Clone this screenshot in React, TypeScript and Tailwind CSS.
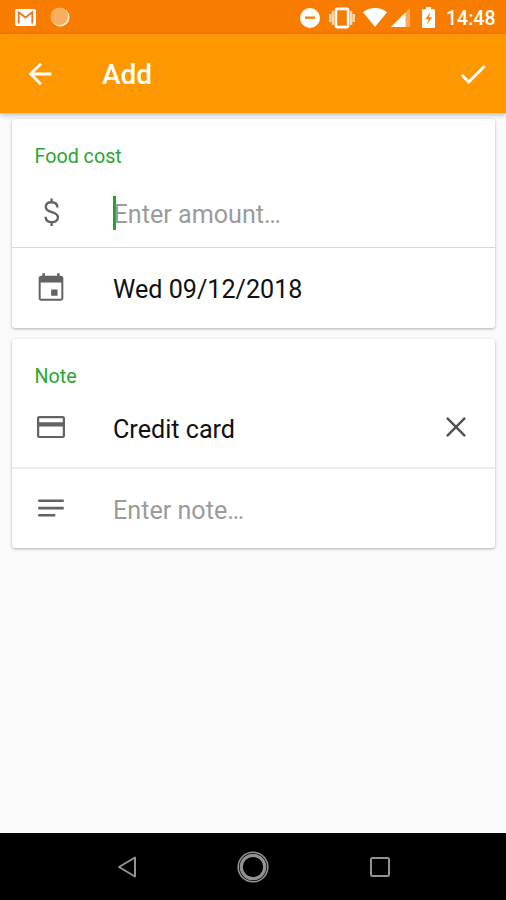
import type { ReactNode } from "react"

type IconProps = { d: string; className?: string }

// 24dp material glyphs
const icons = {
  back: "M20 11H7.83l5.59-5.59L12 4l-8 8 8 8 1.41-1.41L7.83 13H20v-2z",
  check: "M9 16.17L4.83 12l-1.42 1.41L9 19 21 7l-1.41-1.41z",
  event:
    "M16.6 13h-4.5v4.5h4.5V13zM16.3 1.5v1.800H7.7V1.5H5.9v1.800H5c-1 0-1.7.8-1.7 1.7v14.3c0 1 .8 1.7 1.7 1.7h14c1 0 1.7-.8 1.7-1.7V5c0-1-.8-1.7-1.7-1.7h-.9V1.5h-1.8zM19.3 19.6H4.7V8.2h14.6v11.4z",
  card: "M20.3 4.2H3.7c-.9 0-1.6.7-1.6 1.6v12.4c0 .9.7 1.6 1.6 1.6h16.6c.9 0 1.6-.7 1.6-1.6V5.800c0-.9-.7-1.6-1.6-1.6zm0 14.100H3.7v-6.600h16.600v6.600zm0-9.600H3.7V5.800h16.600v2.900z",
  close:
    "M19 6.2L17.8 5 12 10.8 6.2 5 5 6.2 10.8 12 5 17.8 6.2 19 12 13.2 17.8 19 19 17.8 13.2 12z",
  notes: "M3 18h12v-1.8H3V18zM3 6v1.8h18V6H3zm0 7h18v-1.8H3V13z",
}

function Icon({ d, className = "" }: IconProps) {
  return (
    <svg viewBox="0 0 24 24" fill="currentColor" className={`size-[34px] shrink-0 ${className}`}>
      <path d={d} />
    </svg>
  )
}

function StatusBar() {
  return (
    <div className="flex h-[34px] shrink-0 items-center bg-[#f77c00] pl-[15px] pr-[11px] text-white">
      {/* Notifications */}
      <svg viewBox="0 0 21 17" className="h-[17px] w-[21px]">
        <rect width="21" height="17" rx="2" fill="currentColor" />
        <path d="M3.7 14.5V3.3l6.8 5.2 6.8-5.2v11.2" fill="none" stroke="#e8742a" strokeWidth="1.8" />
      </svg>
      <svg viewBox="0 0 20 20" className="ml-[14px] size-5">
        <circle cx="10.3" cy="10.3" r="9.2" fill="#fff0df" />
        <circle cx="9.3" cy="9.2" r="8.8" fill="#f8ad5f" />
      </svg>

      {/* System */}
      <svg viewBox="0 0 20 20" className="ml-auto mt-px size-5">
        <circle cx="10" cy="10" r="10" fill="currentColor" />
        <path d="M5 8.5h10v2.3H5z" fill="#f77c00" />
      </svg>
      <svg viewBox="0 0 26 22" className="ml-[9px] mt-px h-[22px] w-[26px]">
        <path d="M3.9 4v14M22.1 4v14M1.2 7v8M24.8 7v8" stroke="currentColor" strokeWidth="2.4" opacity=".7" />
        <rect x="6.9" y="1.9" width="12.2" height="18.2" rx="1.5" fill="none" stroke="currentColor" strokeWidth="2.6" />
      </svg>
      <svg viewBox="0 0 24 19" className="ml-2 h-[19px] w-6" fill="currentColor">
        <path d="M12 19L0 4.2C3.2 1.5 7.3 0 12 0s8.8 1.5 12 4.2z" />
      </svg>
      <svg viewBox="0 0 19 19" className="ml-1 mt-px size-[19px]" fill="currentColor">
        <path d="M19 0v19H0z" opacity=".35" />
        <path d="M14.5 4.5V19H0z" />
      </svg>
      <svg viewBox="0 0 13 21" className="ml-3 h-[21px] w-[13px]">
        <path
          d="M4 0h5v2.3h2.8c.7 0 1.2.5 1.2 1.2v16.3c0 .7-.5 1.2-1.2 1.2H1.2C.5 21 0 20.5 0 19.8V3.5c0-.7.5-1.2 1.2-1.2H4z"
          fill="currentColor"
        />
        <path d="M8 6L3.8 12H7l-1.5 4.5 4.2-6H6.5z" fill="#f77c00" stroke="#f77c00" strokeWidth=".4" />
      </svg>
      <span className="ml-[11px] mt-[3px] w-[49px] whitespace-nowrap text-[19.5px] leading-6 font-medium">14:48</span>
    </div>
  )
}

function Toolbar() {
  return (
    <header className="z-10 flex h-[79px] shrink-0 items-center bg-[#ff9800] pl-[23px] pr-4 text-white shadow-[0_2px_5px_rgba(0,0,0,0.25)]">
      <Icon d={icons.back} />
      <h1 className="ml-[45px] mt-[3px] text-[28px] leading-8 font-medium">Add</h1>
      <Icon d={icons.check} className="ml-auto" />
    </header>
  )
}

function Card({ title, children }: { title: string; children: ReactNode }) {
  return (
    <section className="h-[209px] rounded-[3px] bg-white pt-[25px] shadow-[0_1px_3px_rgba(0,0,0,0.3)]">
      <h2 className="pl-[23px] text-[19.7px] leading-[25px] text-[#2da530]">{title}</h2>
      {children}
    </section>
  )
}

function Row({ icon, children }: { icon: ReactNode; children: ReactNode }) {
  return (
    <div className="flex h-[34px] items-center px-[22px] text-[25.15px] leading-[30px]">
      <div className="mr-[45.5px] flex text-[#636363]">{icon}</div>
      {children}
    </div>
  )
}

function NavBar() {
  return (
    <nav className="flex h-[67px] shrink-0 items-center justify-between bg-black px-[109px] text-[#929292]">
      <svg viewBox="0 0 34 34" className="size-[34px]" fill="none" stroke="currentColor" strokeWidth="2">
        <path d="M26 7.5v19L10 17z" strokeLinejoin="round" />
      </svg>
      <svg viewBox="0 0 34 34" className="size-[34px]" fill="none" stroke="currentColor">
        <circle cx="17" cy="17" r="14.8" strokeWidth="1.6" />
        <circle cx="17" cy="17" r="11.7" strokeWidth="3.2" />
      </svg>
      <svg viewBox="0 0 34 34" className="size-[34px]" fill="none" stroke="currentColor" strokeWidth="2">
        <rect x="8" y="8" width="18" height="18" rx="1.5" />
      </svg>
    </nav>
  )
}

export default function App() {
  return (
    <div className="flex h-[900px] w-[506px] flex-col overflow-hidden bg-[#fafafa] font-[Roboto,sans-serif]">
      <StatusBar />
      <Toolbar />

      <main className="flex flex-1 flex-col gap-[11px] px-[11.5px] pt-1.5">
        <Card title="Food cost">
          <div className="h-[79px] border-b border-[#d9d9d9] pt-[27px]">
            <Row
              icon={
                <svg viewBox="0 0 34 34" className="size-[34px]" fill="none" stroke="currentColor" strokeWidth="2.4">
                  <path d="M23.5 11.5c-.2-3.3-2.3-5.2-5.9-5.2-3.5 0-5.8 1.8-5.8 4.6 0 6.7 12.2 3.6 12.2 10.4 0 2.9-2.5 4.8-6.1 4.8-3.8 0-6.2-2.1-6.3-5.4M17.6 2.5v4M17.6 26v4" />
                </svg>
              }
            >
              <span className="h-[34px] w-[2.5px] bg-[#1fa52a]" />
              <span className="-ml-[2px] mt-[3px] text-[#9b9b9b]">Enter amount…</span>
            </Row>
          </div>
          <div className="pt-[23px]">
            <Row icon={<Icon d={icons.event} />}>
              <span className="mt-[4px] text-[#111]">Wed 09/12/2018</span>
            </Row>
          </div>
        </Card>

        <Card title="Note">
          <div className="h-[80px] border-b-2 border-[#ececec] pt-[21px]">
            <Row icon={<Icon d={icons.card} />}>
              <span className="mt-[6px] text-[#111]">Credit card</span>
              <Icon d={icons.close} className="ml-auto text-[#505050]" />
            </Row>
          </div>
          <div className="pt-[22px]">
            <Row icon={<Icon d={icons.notes} />}>
              <span className="mt-[5px] text-[#9b9b9b]">Enter note…</span>
            </Row>
          </div>
        </Card>
      </main>

      <NavBar />
    </div>
  )
}
